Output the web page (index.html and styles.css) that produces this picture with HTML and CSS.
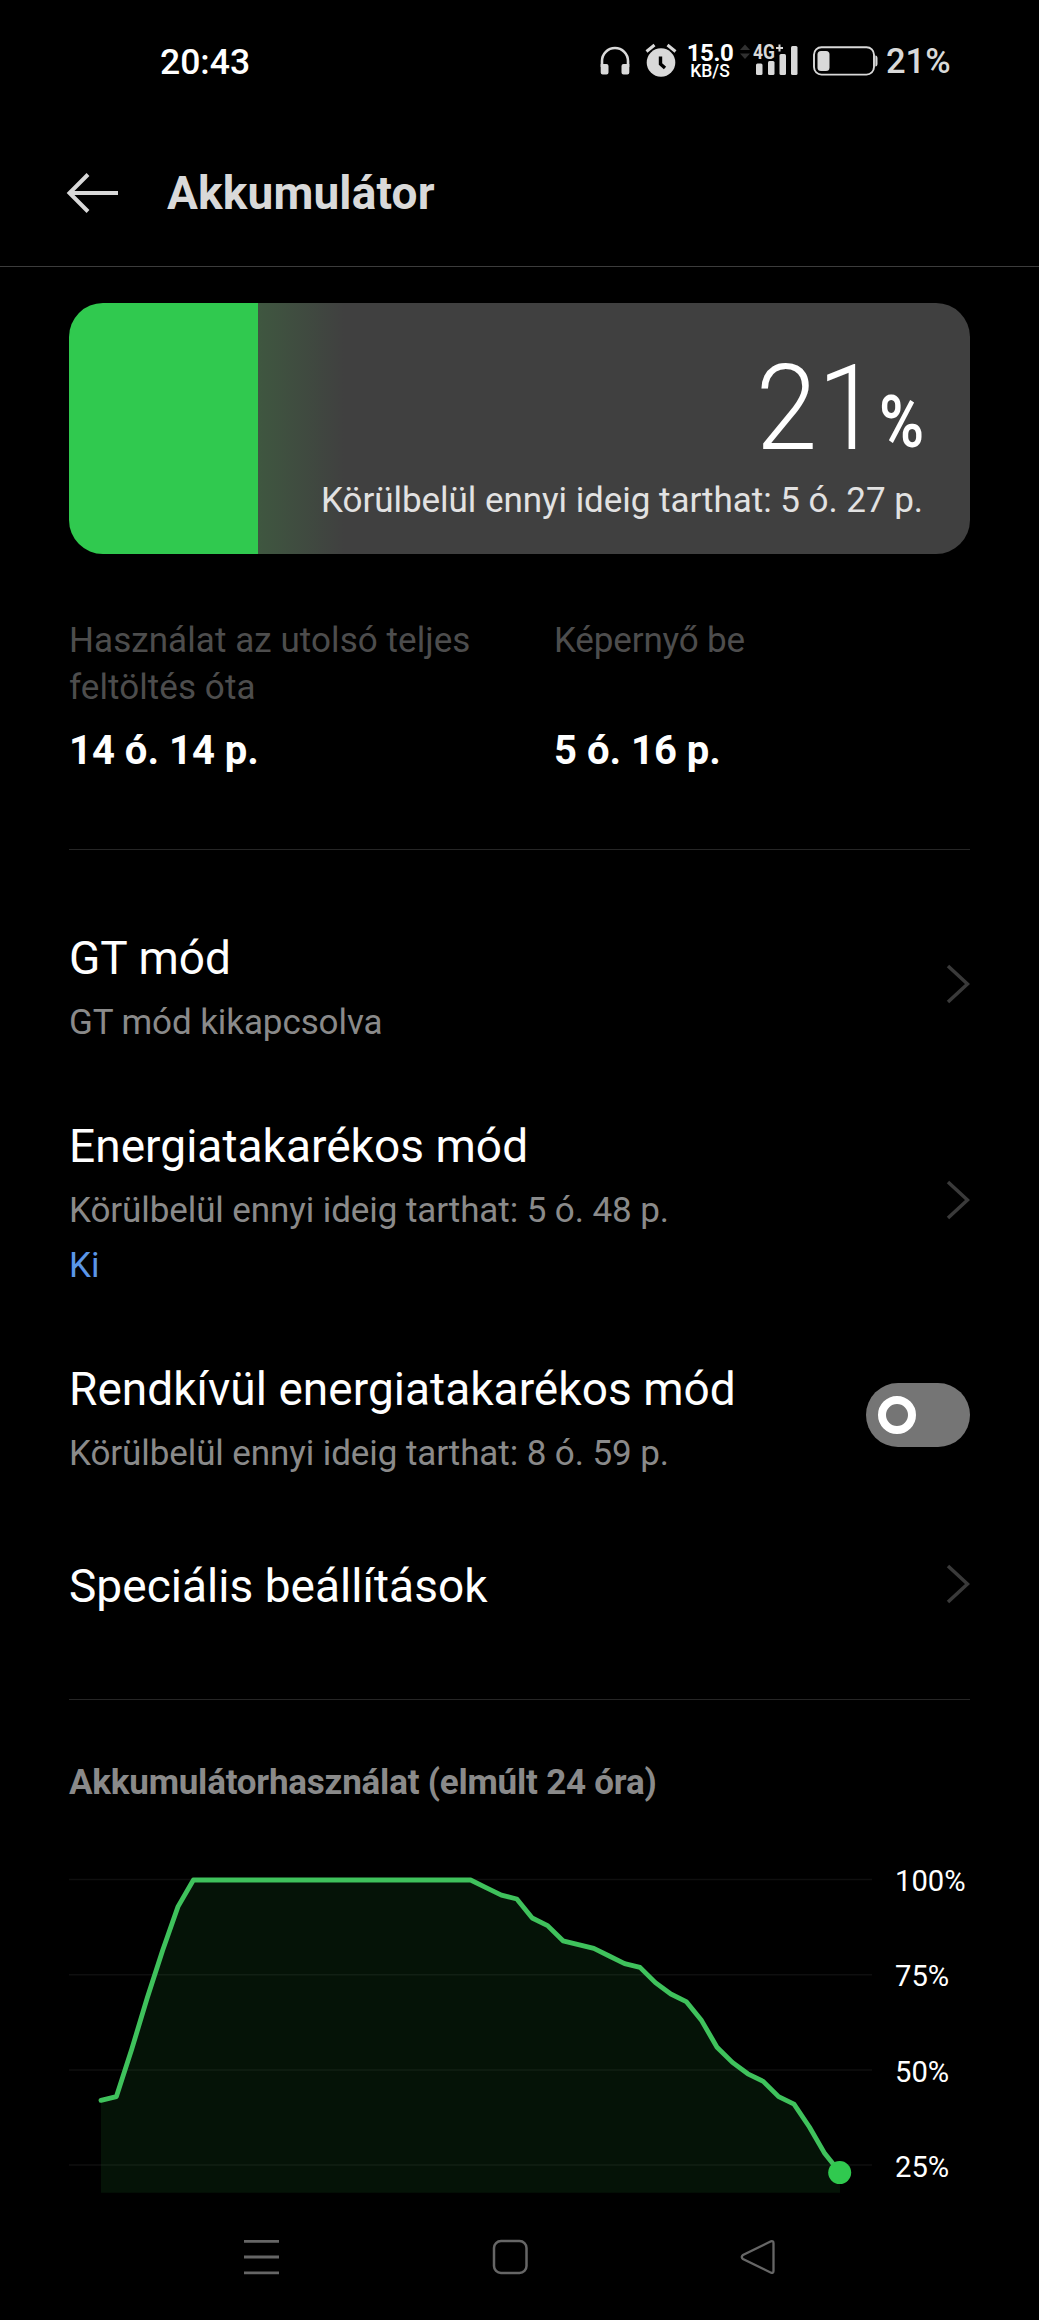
FILE: index.html
```html
<!DOCTYPE html>
<html lang="hu">
<head>
<meta charset="utf-8">
<title>Akkumulátor</title>
<link rel="stylesheet" href="styles.css">
</head>
<body>
<div class="status">
  <span class="clock">20:43</span>
  <div class="status-icons">
    <svg class="headphones" width="30" height="30" viewBox="0 0 30 30"><path d="M2 21V15a13 13 0 0 1 26 0V21" fill="none" stroke="#d9d9d9" stroke-width="2.6"/><path d="M.7 18H6.500a2 2 0 0 1 2 2v6.500a2 2 0 0 1-2 2H2.700a2 2 0 0 1-2-2zM29.300 18H23.500a2 2 0 0 0-2 2v6.500a2 2 0 0 0 2 2h3.800a2 2 0 0 0 2-2z" fill="#d9d9d9"/></svg>
    <svg class="alarm" width="32" height="34" viewBox="0 0 32 34"><circle cx="16" cy="19.500" r="14.300" fill="#d9d9d9"/><path d="M1.500 8.500 9.500 2M30.500 8.500 22.500 2" stroke="#d9d9d9" stroke-width="3"/><path d="M15.500 13.500v7.500l4.500 4" fill="none" stroke="#000" stroke-width="3.400"/></svg>
    <div class="speed"><span class="speed-value">15.0</span><span class="speed-unit">KB/S</span></div>
    <svg class="signal" width="60" height="34" viewBox="0 0 60 34"><path d="M0 7 5 1.500 10 7zM0 10.500 5 16l5-5.500z" fill="#303030"/><text class="net" x="13" y="16" textLength="22" lengthAdjust="spacingAndGlyphs">4G</text><path d="M39.500 1.500v7M36 5h7" stroke="#d9d9d9" stroke-width="2"/><g fill="#d9d9d9"><rect x="16" y="20.500" width="6.500" height="11.500" rx="1.500"/><rect x="28" y="18" width="6.500" height="14" rx="1.500"/><rect x="39.500" y="11" width="6.500" height="21" rx="1.500"/><rect x="51" y="3" width="6.500" height="29" rx="1.500"/></g></svg>
    <svg class="battery" width="66" height="30" viewBox="0 0 66 30"><rect x="1" y="1.200" width="60" height="27.400" rx="7.500" fill="none" stroke="#d9d9d9" stroke-width="1.900"/><rect x="4.500" y="5" width="12" height="20" rx="3.500" fill="#d9d9d9"/><path d="M62.300 9.500q2.200 0 2.200 3v5q0 3-2.200 3z" fill="#d9d9d9"/></svg>
    <span class="level">21%</span>
  </div>
</div>
<header class="header">
  <svg width="54" height="42" viewBox="0 0 54 42"><path d="M52 21H4M22 2.500 3.500 21 22 39.500" fill="none" stroke="#d9d9d9" stroke-width="4"/></svg>
  <h1 class="title">Akkumulátor</h1>
</header>
<main class="content">
  <section class="card">
    <div class="card-value"><span class="card-number">21</span><span class="card-percent">%</span></div>
    <div class="card-text">Körülbelül ennyi ideig tarthat: 5 ó. 27 p.</div>
  </section>
  <section class="stats">
    <div class="stat"><div class="stat-label">Használat az utolsó teljes feltöltés óta</div><div class="stat-value">14 ó. 14 p.</div></div>
    <div class="stat"><div class="stat-label stat-label-short">Képernyő be</div><div class="stat-value">5 ó. 16 p.</div></div>
  </section>
  <section class="list">
    <div class="row">
      <div class="row-text"><div class="row-title">GT mód</div><div class="row-sub">GT mód kikapcsolva</div></div>
      <svg class="chevron" width="24" height="40" viewBox="0 0 24 40"><path d="M2 2 21.500 20 2 38"/></svg>
    </div>
    <div class="row">
      <div class="row-text"><div class="row-title">Energiatakarékos mód</div><div class="row-sub">Körülbelül ennyi ideig tarthat: 5 ó. 48 p.</div><div class="row-state">Ki</div></div>
      <svg class="chevron" width="24" height="40" viewBox="0 0 24 40"><path d="M2 2 21.500 20 2 38"/></svg>
    </div>
    <div class="row">
      <div class="row-text"><div class="row-title">Rendkívül energiatakarékos mód</div><div class="row-sub">Körülbelül ennyi ideig tarthat: 8 ó. 59 p.</div></div>
      <div class="switch"><div class="knob"></div></div>
    </div>
    <div class="row row-single">
      <div class="row-text"><div class="row-title">Speciális beállítások</div></div>
      <svg class="chevron" width="24" height="40" viewBox="0 0 24 40"><path d="M2 2 21.500 20 2 38"/></svg>
    </div>
  </section>
  <h2 class="usage-title">Akkumulátorhasználat (elmúlt 24 óra)</h2>
  <section class="chart">
    <svg width="803" height="360" viewBox="0 0 803 360">
      <g class="grid"><path d="M0 46.500H803M0 141.700H803M0 237H803M0 332H803"/></g>
      <path class="area" d="M32 267.400 47.400 263.600 62.800 216 78.200 165 93.600 117.500 109 73.600 124.400 47H401.600L417 54.600 432.400 62.200 447.800 66 463.200 85 478.600 92.600 494 107.800 509.400 111.600 524.800 115.400 540.200 123 555.600 130.600 571 134.400 586.400 149.600 601.800 161 617.200 168.600 632.600 187.600 648 214.200 663.400 229.400 678.800 240.800 694.200 248.400 709.600 263.600 725 271.200 740.400 294 755.800 320.600 771 339.600V359.700H32z"/>
      <path class="line" d="M32 267.400 47.400 263.600 62.800 216 78.200 165 93.600 117.500 109 73.600 124.400 47H401.600L417 54.600 432.400 62.200 447.800 66 463.200 85 478.600 92.600 494 107.800 509.400 111.600 524.800 115.400 540.200 123 555.600 130.600 571 134.400 586.400 149.600 601.800 161 617.200 168.600 632.600 187.600 648 214.200 663.400 229.400 678.800 240.800 694.200 248.400 709.600 263.600 725 271.200 740.400 294 755.800 320.600 771 339.600"/>
      <circle cx="770.700" cy="339.600" r="11.500" fill="#30c94f"/>
    </svg>
    <div class="scale"><span>100%</span><span>75%</span><span>50%</span><span>25%</span></div>
  </section>
</main>
<nav class="nav">
  <svg width="36" height="36" viewBox="0 0 36 36"><path d="M0 2.300H35M0 18H35M0 33.800H35" stroke="#666" stroke-width="2.800"/></svg>
  <svg width="36" height="36" viewBox="0 0 36 36"><rect x="2" y="2" width="32.500" height="32" rx="7" fill="none" stroke="#666" stroke-width="2.500"/></svg>
  <svg width="36" height="36" viewBox="0 0 36 36"><path d="M31 2.300 3 16q-2.500 2 0 4L31 33.700q2.500.8 2.500-2V4.300q0-2.800-2.500-2z" fill="none" stroke="#666" stroke-width="2.300"/></svg>
</nav>
</body>
</html>
```
FILE: styles.css
```css
* { box-sizing: border-box; }
body { margin: 0; width: 1039px; height: 2320px; background: #000; color: #fff; font-family: Roboto, "Liberation Sans", sans-serif; overflow: hidden; }
svg { display: block; flex: none; }
h1, h2 { margin: 0; }

.status { height: 120px; padding: 0 87px 0 160px; display: flex; justify-content: space-between; align-items: flex-start; white-space: nowrap; }
.clock { margin-top: 37px; font-size: 35.5px; line-height: 50px; font-weight: 500; }
.status-icons { display: flex; align-items: flex-start; color: #d9d9d9; }
.headphones { margin-top: 46px; }
.alarm { margin: 43px 0 0 15px; }
.speed { width: 46px; margin: 42px 0 0 10px; display: flex; flex-direction: column; align-items: center; color: #fff; }
.speed-value { font-size: 24px; line-height: 22px; font-weight: 700; letter-spacing: -.4px; }
.speed-unit { font-size: 17.5px; line-height: 15px; font-weight: 500; }
.signal { margin: 43px 0 0 7px; overflow: visible; }
.net { font-size: 20px; font-weight: 700; fill: #d9d9d9; }
.battery { margin: 46px 0 0 13px; }
.level { width: 66px; margin: 36px 0 0 7px; font-size: 34.5px; line-height: 50px; font-weight: 500; }

.header { height: 147px; padding: 0 66px; border-bottom: 1px solid #3c3c3c; display: flex; align-items: center; gap: 47px; }
.title { font-size: 46px; line-height: 54px; font-weight: 700; letter-spacing: .15px; color: #d9d9d9; }

.content { padding: 36px 69px 0; }
.card { height: 251px; padding: 46px 47px 0 0; border-radius: 34px; text-align: right; background: linear-gradient(90deg, #30c94f 189px, #3f5740 189px, #404040 275px); }
.card-value { height: 120px; margin-right: -1px; display: flex; justify-content: flex-end; align-items: baseline; line-height: 120px; }
.card-number { margin-right: -8px; font-size: 118px; font-weight: 300; transform: scaleX(.94); transform-origin: right; }
.card-percent { font-size: 72px; font-weight: 600; transform: translateY(-2px) scaleX(.85); transform-origin: right; }
.card-text { margin-top: 8px; font-size: 35px; line-height: 47px; letter-spacing: -.04px; color: #e2e2e2; }

.stats { margin-top: 63px; padding-bottom: 75px; border-bottom: 1px solid #262626; display: grid; grid-template-columns: 415px 1fr; column-gap: 70px; }
.stat { display: flex; flex-direction: column; }
.stat-label { height: 94px; margin-bottom: 17px; font-size: 35px; line-height: 47px; letter-spacing: .07px; color: #4d4d4d; }
.stat-label-short { letter-spacing: -.15px; }
.stat-value { font-size: 40px; line-height: 46px; font-weight: 700; }

.list { padding: 73px 0 86px; border-bottom: 1px solid #262626; display: flex; flex-direction: column; gap: 65px; }
.row { display: flex; justify-content: space-between; align-items: center; }
.row-text { padding-top: 8px; }
.row-title { font-size: 46px; line-height: 54px; letter-spacing: .04px; }
.row-sub { margin-top: 14px; font-size: 35px; line-height: 47px; letter-spacing: -.09px; color: #8a8a8a; }
.row-state { margin-top: 8px; font-size: 35px; line-height: 47px; color: #5b96e8; }
.row-single { margin-top: 13px; }
.row-single .row-text { padding-top: 4px; }
.chevron { margin-bottom: 1px; }
.chevron path { fill: none; stroke: #3a3a3a; stroke-width: 3.5; }
.switch { width: 104px; height: 64px; margin-bottom: 1px; padding: 13px 12px; border-radius: 32px; background: #757575; }
.knob { width: 38px; height: 38px; border: 8px solid #fff; border-radius: 50%; }

.usage-title { margin-top: 59px; font-size: 35px; line-height: 47px; font-weight: 700; letter-spacing: -.22px; color: #8a8a8a; }
.chart { height: 360px; margin-top: 27px; display: flex; gap: 23px; }
.grid { fill: none; stroke: #0f0f0f; stroke-width: 1.5; }
.area { fill: #30c94f; fill-opacity: .095; }
.line { fill: none; stroke: #3fc25c; stroke-width: 4.8; stroke-linecap: round; stroke-linejoin: round; }
.scale { padding-top: 1px; display: flex; flex-direction: column; font-size: 29.2px; line-height: 95.3px; }

.nav { height: 127px; padding: 0 263px 0 244px; display: flex; justify-content: space-between; align-items: center; }
```
